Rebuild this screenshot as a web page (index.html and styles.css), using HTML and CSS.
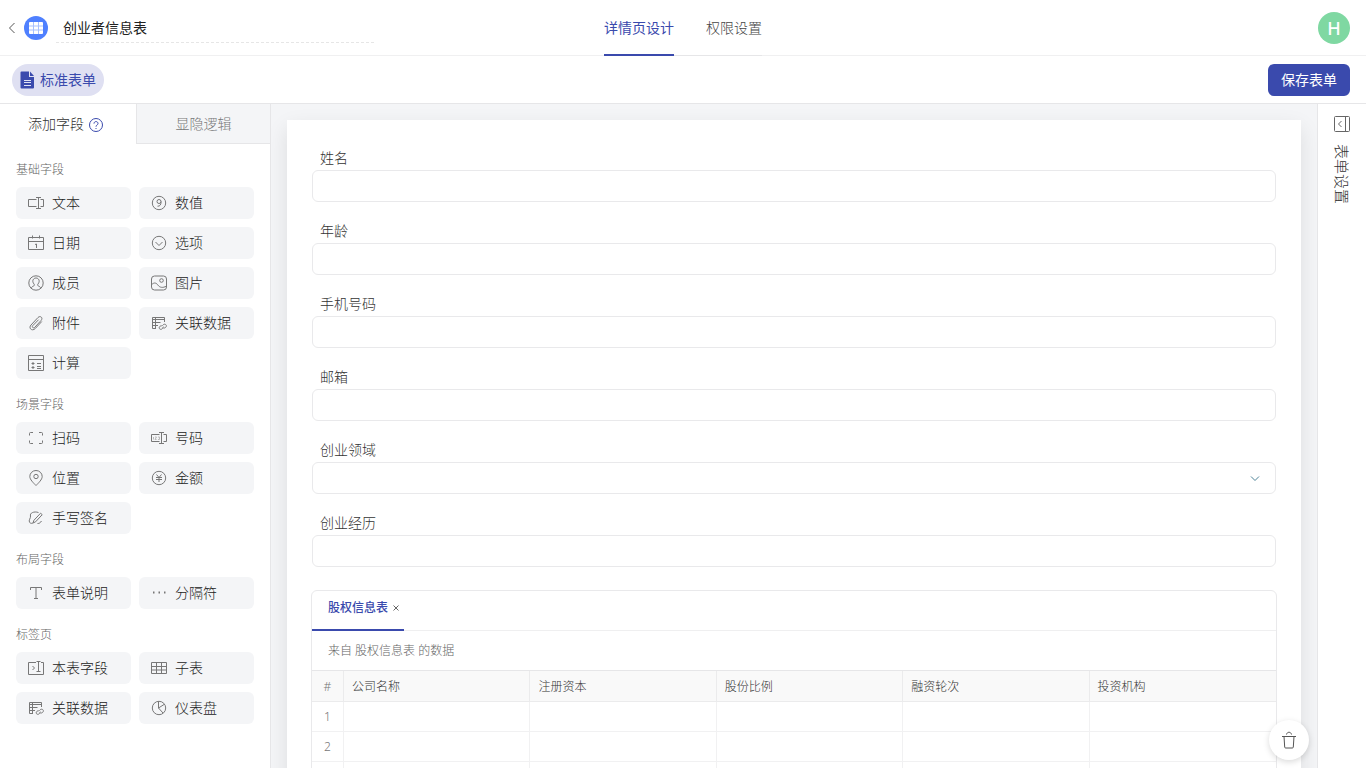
FILE: index.html
```html
<!DOCTYPE html>
<html lang="zh-CN">
<head>
<meta charset="utf-8">
<meta name="viewport" content="width=device-width, initial-scale=1">
<title>创业者信息表</title>
<link rel="stylesheet" href="styles.css">
</head>
<body>
<svg class="sprite" aria-hidden="true">
  <symbol id="i-link" viewBox="0 0 16 16"><path d="M5 13.500H1.500v-11h12V7M1.500 4.500h12M4.500 2.500v11M1.500 7.500h8M1.500 10.500H7"/><path d="M11.300 10.700l1-1c1.800-1.500 4.100.7 2.600 2.400-.8.900-1.700 1-2.600 1M12.400 11.700l-1 1.900c-1.500 1.700-4 .2-3-1.600.7-1.200 1.600-1.200 2.500-1.200"/></symbol>
</svg>

<header class="header">
  <div class="header-start">
    <button class="back" type="button" aria-label="返回"><svg width="8" height="12" viewBox="0 0 8 12"><path d="M6.500 1L1.500 6l5 5"/></svg></button>
    <span class="app-icon"><svg width="14" height="12" viewBox="0 0 14 12"><rect width="14" height="12" rx="1" fill="#fff"/><path d="M4.500 0v12M9.500 0v12M0 4h14M0 8h14" stroke="#a8c1ff" stroke-width="1"/></svg></span>
    <input class="title" type="text" value="创业者信息表" aria-label="表单名称">
  </div>
  <nav class="header-tabs">
    <a class="active" href="#design">详情页设计</a>
    <a href="#auth">权限设置</a>
  </nav>
  <div class="header-end"><span class="avatar">H</span></div>
</header>

<div class="toolbar">
  <button class="pill" type="button"><svg width="14" height="18" viewBox="0 0 14 18"><path d="M1.500 .5H9V6h5v10.500a1 1 0 0 1-1 1H1.500a1 1 0 0 1-1-1v-15a1 1 0 0 1 1-1z" fill="#3a4aad"/><path d="M10 .5L14 5h-4z" fill="#3a4aad"/><path d="M4 9.500h7M4 11.500h7M4 14.500h7" stroke="#e0e2f4"/></svg>标准表单</button>
  <button class="save" type="button">保存表单</button>
</div>

<div class="body">
  <aside class="side">
    <div class="side-tabs">
      <button class="side-tab active" type="button">添加字段<svg width="16" height="18" viewBox="0 0 16 18"><circle cx="8" cy="10" r="6.500"/><path d="M6 8.600c0-2.700 4-2.700 4 0 0 1.400-2 1.400-2 3.100M8 13v1"/></svg></button>
      <button class="side-tab" type="button">显隐逻辑</button>
    </div>
    <div class="groups">
      <section>
        <h2>基础字段</h2>
        <div class="items">
          <button type="button"><svg viewBox="0 0 16 16"><path d="M8.500 4.500h-8v7h8M12.500 4.500h3v7h-3M8 2.500h5M8 13.500h5M10.500 2.500v11"/></svg>文本</button>
          <button type="button"><svg viewBox="0 0 16 16"><circle cx="8" cy="8" r="6.700"/><circle cx="8" cy="6.500" r="2"/><path d="M10 6.500c.2 3-1 5-3.500 4.700"/></svg>数值</button>
          <button type="button"><svg viewBox="0 0 16 16"><path d="M.5 2.500h15v12H.5zM.5 6.500h15M4.500 .5v3M11.500 .5v3M7 9.500l1.500-.5v4"/></svg>日期</button>
          <button type="button"><svg viewBox="0 0 16 16"><circle cx="8" cy="8" r="6.700"/><path d="M4.500 7L8 10.500 11.500 7"/></svg>选项</button>
          <button type="button"><svg viewBox="0 0 16 16"><circle cx="8" cy="8" r="7.200"/><path d="M3.200 13.300c.3-1.200 1.200-1.800 2.500-2.400.9-.4.9-1.200.2-2-2.300-2.900-.6-5.900 2.100-5.900s4.400 3 2.100 5.900c-.7.8-.7 1.600.2 2 1.300.6 2.200 1.200 2.500 2.400"/></svg>成员</button>
          <button type="button"><svg viewBox="0 0 16 16"><rect x=".5" y="1" width="15" height="14" rx="3"/><circle cx="10.500" cy="5.500" r="1.800"/><path d="M.8 9.500c2.500-2.500 4.700-1.500 6.200.7 2 2.600 5 2.800 8.300 1"/></svg>图片</button>
          <button type="button"><svg viewBox="0 0 16 16"><path d="M13.800 6.500l-6.500 7c-3.200 3.200-7.200-.2-4.300-3.500l7-7.500c2.300-2.300 5.300.3 3.200 2.800l-6.400 7c-1.500 1.400-3.300-.2-2-1.700L10.600 4.700"/></svg>附件</button>
          <button type="button"><svg viewBox="0 0 16 16"><use href="#i-link"/></svg>关联数据</button>
          <button type="button"><svg viewBox="0 0 16 16"><path d="M.5 .5h15v15H.5zM.5 4.500h15M3.500 8.500h3M5 7v3M9 8.500h4M3.500 12.500h3M5 11v3M9 11.500h4M9 13.500h4"/></svg>计算</button>
        </div>
      </section>
      <section>
        <h2>场景字段</h2>
        <div class="items">
          <button type="button"><svg viewBox="0 0 16 16"><path d="M1.500 5.500v-2a1 1 0 0 1 1-1H5M11 2.500h2.500a1 1 0 0 1 1 1v2M14.500 10.500v2a1 1 0 0 1-1 1H11M5 13.500H2.500a1 1 0 0 1-1-1v-2"/></svg>扫码</button>
          <button type="button"><svg viewBox="0 0 16 16"><path d="M8.500 4.500h-8v7h8M12.500 4.500h3v7h-3M8 2.500h5M8 13.500h5M10.500 2.500v11"/><path class="faint" d="M2.500 7v2.500M4 7h1.500L4 9.500h1.500M7 7h1.500v2.500H7"/></svg>号码</button>
          <button type="button"><svg viewBox="0 0 16 16"><path d="M8 15.500C5.500 13 1.800 9.500 1.800 6.500a6.200 6 0 0 1 12.400 0c0 3-3.700 6.500-6.200 9z"/><circle cx="8" cy="6.500" r="2.200"/></svg>位置</button>
          <button type="button"><svg viewBox="0 0 16 16"><circle cx="8" cy="8" r="6.700"/><path d="M5.500 4.500L8 7.500l2.500-3M5 7.500h6M5 9.500h6M8 7.500V12"/></svg>金额</button>
          <button type="button"><svg viewBox="0 0 16 16"><path d="M12.600 3.200l1.600 1.500-6.600 7.100-2.600 1.200.9-2.700zM10.500 2.500C6 1 1.500 3 2.500 6c.5 2-2.500 4.500-.8 6.500C2.700 13.600 4 13.500 5 13M9.500 13.500c2 .2 3-1 4-2.500"/></svg>手写签名</button>
        </div>
      </section>
      <section>
        <h2>布局字段</h2>
        <div class="items">
          <button type="button"><svg viewBox="0 0 16 16"><path d="M2.500 5V2.500h11V5M8 2.500v11M6 13.500h4"/></svg>表单说明</button>
          <button type="button"><svg viewBox="0 0 16 16"><path class="dots" d="M2 7.500h1.500M7.500 7.500H9M13 7.500h1.500"/></svg>分隔符</button>
        </div>
      </section>
      <section>
        <h2>标签页</h2>
        <div class="items">
          <button type="button"><svg viewBox="0 0 16 16"><path d="M8 2.500H.5v12h15v-12H13M8.500 1.500h4M8.500 11.500h4M10.500 1.500v10M4.500 6l2 2-2 2"/></svg>本表字段</button>
          <button type="button"><svg viewBox="0 0 16 16"><path d="M.5 2.500h15v11H.5zM.5 6.500h15M.5 10h15M5.500 2.500v11M10.500 2.500v11"/></svg>子表</button>
          <button type="button"><svg viewBox="0 0 16 16"><use href="#i-link"/></svg>关联数据</button>
          <button type="button"><svg viewBox="0 0 16 16"><circle cx="8" cy="8" r="6.700"/><path d="M7.500 1.500V8l4.500 5M7.500 8l5.500-3.500"/></svg>仪表盘</button>
        </div>
      </section>
    </div>
  </aside>

  <main class="canvas">
    <form class="paper">
      <div class="field"><label for="f1">姓名</label><input id="f1" type="text"></div>
      <div class="field"><label for="f2">年龄</label><input id="f2" type="text"></div>
      <div class="field"><label for="f3">手机号码</label><input id="f3" type="text"></div>
      <div class="field"><label for="f4">邮箱</label><input id="f4" type="text"></div>
      <div class="field"><label for="f5">创业领域</label>
        <div class="select-wrap"><select id="f5"><option></option></select><svg width="10" height="6" viewBox="0 0 10 6"><path d="M1 .5L5 4.500 9 .5"/></svg></div>
      </div>
      <div class="field"><label for="f6">创业经历</label><input id="f6" type="text"></div>

      <section class="sub">
        <div class="sub-tabs">
          <div class="sub-tab"><a href="#equity">股权信息表</a><button type="button" aria-label="关闭"><svg width="6" height="6" viewBox="0 0 6 6"><path d="M.5 .5l5 5M5.500 .5l-5 5"/></svg></button></div>
        </div>
        <p class="source">来自 股权信息表 的数据</p>
        <table>
          <thead><tr><th class="num">#</th><th>公司名称</th><th>注册资本</th><th>股份比例</th><th>融资轮次</th><th>投资机构</th></tr></thead>
          <tbody>
            <tr><td class="num">1</td><td></td><td></td><td></td><td></td><td></td></tr>
            <tr><td class="num">2</td><td></td><td></td><td></td><td></td><td></td></tr>
            <tr><td class="num"></td><td></td><td></td><td></td><td></td><td></td></tr>
          </tbody>
        </table>
      </section>
    </form>
    <button class="trash" type="button" aria-label="删除"><svg width="16" height="18" viewBox="0 0 16 18"><path d="M1 5.500h14M3 5.500l.7 10.500a1 1 0 0 0 1 1h6.600a1 1 0 0 0 1-1L13 5.500M5.500 3.500c.5-3 4.500-3 5 0"/></svg></button>
  </main>

  <aside class="settings">
    <button type="button"><svg width="16" height="16" viewBox="0 0 16 16"><rect x=".5" y=".5" width="15" height="15" rx="1"/><path d="M11.500 .5v15M7.500 5l-3 3 3 3"/></svg><span>表单设置</span></button>
  </aside>
</div>
</body>
</html>
```

FILE: styles.css
```css
* { box-sizing: border-box; }

body {
  margin: 0;
  height: 100vh;
  display: flex;
  flex-direction: column;
  overflow: hidden;
  font: 300 14px/20px "Noto Sans", "Noto Sans CJK SC", sans-serif;
  color: #444;
  background: #fff;
}

button, input, select { font: inherit; color: inherit; }
button { border: 0; padding: 0; background: none; cursor: pointer; }
a { color: inherit; text-decoration: none; }
svg { display: block; flex: none; fill: none; stroke: none; }
.sprite { position: absolute; width: 0; height: 0; }

.header {
  flex: none;
  height: 56px;
  display: grid;
  grid-template-columns: 1fr auto 1fr;
  border-bottom: 1px solid #f0f0f1;
}
.header-start { display: flex; align-items: center; padding-left: 8px; }
.back svg { stroke: #555; }
.app-icon {
  width: 24px;
  height: 24px;
  margin: 0 8px;
  border-radius: 50%;
  background: #4f80ff;
  display: grid;
  place-items: center;
}
.title {
  width: 318px;
  height: 30px;
  padding: 0 7px 2px;
  border: 0;
  border-bottom: 1px dashed #e6e6e6;
  outline: 0;
  font-weight: 400;
  color: #222;
}
.header-tabs { display: flex; gap: 32px; height: 56px; border-bottom: 1px solid #e6e6e8; }
.header-tabs a { height: 56px; line-height: 56px; }
.header-tabs .active {
  color: #3a4aad;
  font-weight: 400;
  border-bottom: 2px solid #3a4aad;
}
.header-end { display: flex; align-items: center; justify-content: flex-end; padding-right: 16px; }
.avatar {
  width: 32px;
  height: 32px;
  border-radius: 50%;
  background: #7fd8a2;
  color: #fff;
  font-size: 18px;
  font-weight: 500;
  line-height: 32px;
  text-align: center;
}

.toolbar {
  flex: none;
  height: 48px;
  padding: 0 16px 0 12px;
  display: flex;
  align-items: center;
  justify-content: space-between;
  border-bottom: 1px solid #e6e6e8;
}
.pill {
  height: 32px;
  padding: 0 8px;
  display: flex;
  align-items: center;
  gap: 6px;
  border-radius: 16px;
  background: #dfe0f2;
  color: #3a4aad;
  font-weight: 400;
}
.save {
  height: 32px;
  padding: 0 13px;
  border-radius: 6px;
  background: #3a4aad;
  color: #fff;
  font-weight: 400;
}

.body { flex: 1; min-height: 0; display: flex; }

.side { flex: none; width: 271px; border-right: 1px solid #e6e6e8; overflow: hidden; }
.side-tabs { display: flex; height: 40px; }
.side-tab {
  flex: 1;
  background: #f4f5f7;
  color: #777;
  border-left: 1px solid #e6e6e8;
  border-bottom: 1px solid #e6e6e8;
}
.side-tab.active {
  flex: none;
  width: 136px;
  display: flex;
  align-items: center;
  padding-left: 28px;
  gap: 4px;
  background: #fff;
  color: #333;
  border: 0;
}
.side-tab svg { stroke: #3a4aad; }
.groups { padding: 16px; display: flex; flex-direction: column; gap: 16px; }
h2 { margin: 0 0 7px; font-size: 12px; font-weight: 300; line-height: 20px; color: #666; }
.items { display: grid; grid-template-columns: 1fr 1fr; gap: 8px; }
.items button {
  height: 32px;
  padding: 0 12px;
  display: flex;
  align-items: center;
  gap: 8px;
  border-radius: 6px;
  background: #f4f5f7;
  color: #222;
}
.items svg { width: 16px; height: 16px; stroke: #777; }
.items .dots { stroke-width: 2; }
.items .faint { stroke: #bbb; }

.canvas {
  position: relative;
  flex: 1;
  min-width: 0;
  padding: 16px 16px 0;
  overflow: hidden;
  background: #f4f5f7;
}
.paper {
  min-height: 100%;
  padding: 26px 24px;
  background: #fff;
  box-shadow: 0 8px 20px rgba(0, 0, 0, .1);
}
.field { padding: 0 1px 17px; }
.field label { display: block; padding-left: 8px; line-height: 24px; color: #333; }
.field input, .field select {
  display: block;
  width: 100%;
  height: 32px;
  padding: 0 8px;
  border: 1px solid #e9e9eb;
  border-radius: 6px;
  background: #fff;
  appearance: none;
}
.select-wrap { position: relative; }
.select-wrap svg { position: absolute; right: 16px; top: 14px; stroke: #4d8296; }

.sub { margin-top: 6px; border: 1px solid #e9e9eb; border-radius: 6px 6px 0 0; font-size: 12px; }
.sub-tabs { display: flex; height: 40px; border-bottom: 1px solid #efeff0; }
.sub-tab {
  height: 40px;
  padding: 0 5px 4px 16px;
  display: flex;
  align-items: center;
  gap: 5px;
  border-bottom: 2px solid #3a4aad;
  color: #3a4aad;
  font-weight: 500;
}
.sub-tab svg { stroke: #666; }
.source { margin: 0; line-height: 39px; padding-left: 16px; color: #666; }
table { width: 100%; table-layout: fixed; border-collapse: separate; border-spacing: 0; border-top: 1px solid #e6e6e8; }
th, td {
  height: 30px;
  padding: 0 8px;
  border-right: 1px solid #f1f1f2;
  border-bottom: 1px solid #f1f1f2;
  text-align: left;
  font-weight: 300;
}
th { height: 31px; padding-top: 2px; background: #f9f9f9; color: #333; border-color: #ebebec; }
th:last-child, td:last-child { border-right: 0; }
.num { width: 32px; padding-left: 0; padding-right: 0; text-align: center; color: #777; }

.trash {
  position: absolute;
  right: 8px;
  bottom: 8px;
  width: 40px;
  height: 40px;
  display: grid;
  place-items: center;
  border-radius: 50%;
  background: #fff;
  box-shadow: 0 2px 6px rgba(0, 0, 0, .15);
}
.trash svg { stroke: #555; }

.settings { flex: none; width: 49px; border-left: 1px solid #e6e6e8; padding-top: 12px; }
.settings button { width: 48px; display: flex; flex-direction: column; align-items: center; gap: 12px; }
.settings svg { stroke: #666; }
.settings span { writing-mode: vertical-rl; text-orientation: sideways; font-size: 15px; color: #333; }
```
